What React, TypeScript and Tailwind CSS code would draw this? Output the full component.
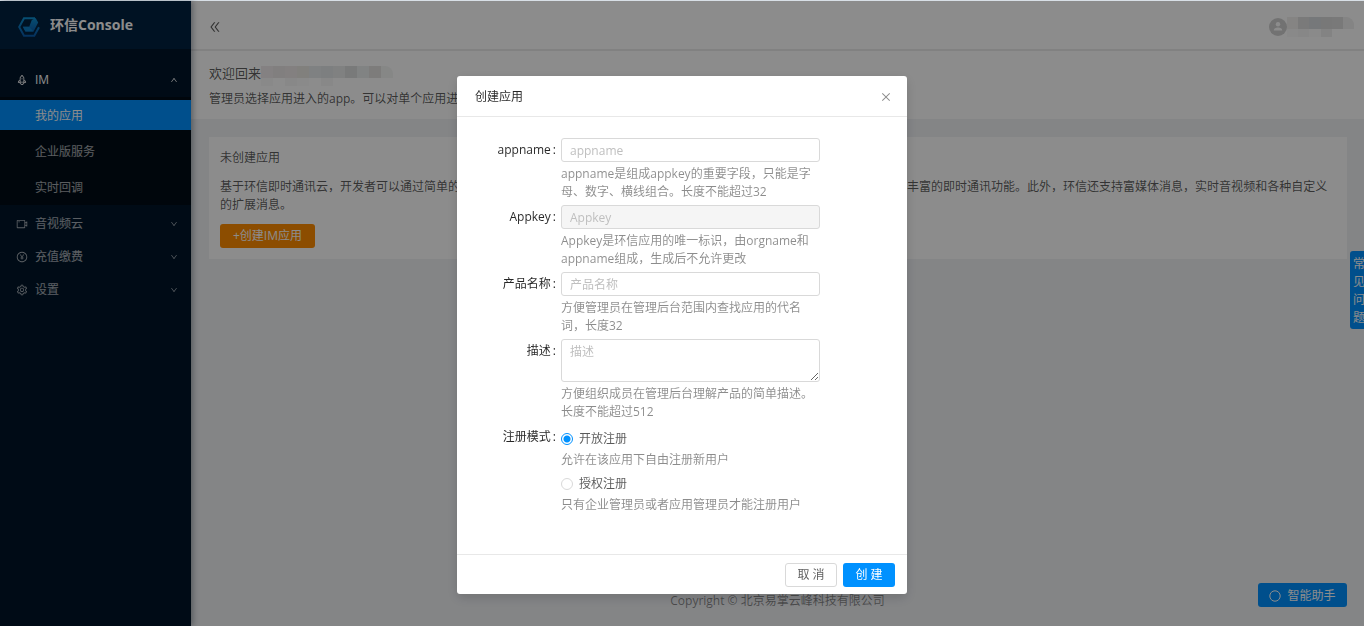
import { useState } from "react";
import {
  AiOutlineClose,
  AiOutlineDoubleLeft,
  AiOutlineDown,
  AiOutlinePayCircle,
  AiOutlineRocket,
  AiOutlineSetting,
  AiOutlineUp,
  AiOutlineVideoCamera,
} from "react-icons/ai";

const SUB_ITEMS = ["我的应用", "企业版服务", "实时回调"];

const SECTIONS = [
  { label: "音视频云", Icon: AiOutlineVideoCamera },
  { label: "充值缴费", Icon: AiOutlinePayCircle },
  { label: "设置", Icon: AiOutlineSetting },
];

const MODES = [
  { value: "open", label: "开放注册", help: "允许在该应用下自由注册新用户" },
  { value: "auth", label: "授权注册", help: "只有企业管理员或者应用管理员才能注册用户" },
];

const rowClass = "flex h-[30px] w-full items-center pt-0.5";

const inputClass =
  "block w-full rounded-[3px] border border-[#d9d9d9] bg-white px-2 text-xs text-black/65 outline-none placeholder:text-[#bfbfbf] disabled:bg-[#f5f5f5]";

function Logo() {
  return (
    <svg viewBox="0 0 22 20" className="h-5 w-[22px]" aria-hidden="true">
      <defs>
        <linearGradient id="logo" x1="0" y1="0" x2="0" y2="1">
          <stop offset="0" stopColor="#0d8fd0" />
          <stop offset="1" stopColor="#0a5cab" />
        </linearGradient>
      </defs>
      <path
        d="M17 1.3H6L1.2 10 6 18.7h10.3L21 10.2"
        fill="none"
        stroke="url(#logo)"
        strokeWidth="2"
      />
      <path d="M4.8 9.8h6.4L13.8 3l3.8-2 2.6 4.4-4.6 9.2H7.4z" fill="url(#logo)" />
      <path d="M4.8 9.8h6.4l4.4 4.8H7.4z" fill="#0d7cc4" />
    </svg>
  );
}

// Masked user names: a strip of muted blocks
function Mosaic({ top, bottom }: { top: string[]; bottom: string[] }) {
  return (
    <div aria-hidden="true" className="overflow-hidden rounded-r-lg">
      <div className="flex h-3">
        {top.map((c, i) => (
          <span key={i} className="w-3" style={{ background: c }} />
        ))}
      </div>
      <div className="flex h-2">
        {bottom.map((c, i) => (
          <span key={i} className="w-3" style={{ background: c }} />
        ))}
      </div>
    </div>
  );
}

function Sidebar() {
  return (
    <aside className="z-10 flex w-[191px] shrink-0 flex-col bg-[#001529] shadow-[2px_0_6px_rgba(0,21,41,0.35)]">
      <div className="flex h-12 items-center gap-2.5 bg-[#002140] pt-1 pl-[18px]">
        <Logo />
        <h1 className="pb-1 text-sm font-bold text-white">环信Console</h1>
      </div>
      <nav className="pt-[15px] text-white/65">
        <button className={`${rowClass} mb-[3px] pr-[13px] pl-4 text-white`}>
          <AiOutlineRocket className="mr-[7px] size-3" />
          IM
          <AiOutlineUp className="ml-auto size-2" />
        </button>
        <ul className="mb-[3px] flex flex-col gap-1.5 bg-[#000c17] py-[3px]">
          {SUB_ITEMS.map((item, i) => (
            <li key={item} className={i === 0 ? "bg-[#0091ff] text-white" : ""}>
              <a href="#" className={`${rowClass} pl-[35px]`}>
                {item}
              </a>
            </li>
          ))}
        </ul>
        {SECTIONS.map(({ label, Icon }) => (
          <button key={label} className={`${rowClass} mb-[3px] pr-[13px] pl-4`}>
            <Icon className="mr-[7px] size-3" />
            {label}
            <AiOutlineDown className="ml-auto size-2" />
          </button>
        ))}
      </nav>
    </aside>
  );
}

function Header() {
  return (
    <header className="flex h-[50px] items-center border-b-2 border-[#ececec] bg-white pt-1 pr-[10px] pl-[17px]">
      <button aria-label="收起菜单">
        <AiOutlineDoubleLeft className="size-3.5 text-black/65" />
      </button>
      <div className="ml-auto flex items-center">
        <svg viewBox="0 0 18 18" className="size-[18px]" aria-hidden="true">
          <circle cx="9" cy="9" r="9" fill="#d0d0d0" />
          <circle cx="9" cy="6.2" r="2.2" fill="#fff" />
          <path d="M4.8 12.6c0-2.2 1.8-3 4.2-3s4.2.8 4.2 3z" fill="#fff" />
        </svg>
        <div className="w-[67px]">
          <Mosaic
            top={["#f3f0ee", "#dedede", "#d8dade", "#dadada", "#dcdcdc", "#f0f0f0"]}
            bottom={["#f9f9f9", "#f6f6f6", "#fcfcfc", "#eeeeee", "#ffffff", "#ffffff"]}
          />
        </div>
      </div>
    </header>
  );
}

function Welcome() {
  return (
    <section className="bg-white px-[18px] pt-3 pb-[11px]">
      <div className="flex h-5">
        <h2 className="text-[13px] leading-5">欢迎回来</h2>
        <div className="pt-[3px]">
          <Mosaic
            top={["#f0eced", "#ece8e8", "#eeeaea", "#ece9e3", "#e8ebed", "#e4e7ea", "#e9ebeb", "#dcdfdf", "#eceeee", "#e4e2e1", "#f4f6f5"]}
            bottom={["#fafafa", "#ffffff", "#f8f7f7", "#fcfcfc", "#ffffff", "#f8f8f8", "#ffffff", "#ffffff", "#ffffff", "#ffffff", "#ffffff"]}
          />
        </div>
      </div>
      <p className="mt-[7px]">管理员选择应用进入的app。可以对单个应用进行管理</p>
    </section>
  );
}

function EmptyCard() {
  return (
    <section className="mt-[18px] mr-[17px] ml-[18px] bg-white px-[11px] pt-3 pb-[11px]">
      <h3>未创建应用</h3>
      <p className="mt-[11px]">
        基于环信即时通讯云，开发者可以通过简单的接口调用和服务端接口快速地在自己的应用中加入单聊、群聊、 聊天室、直播互动等丰富的即时通讯功能。此外，环信还支持富媒体消息，实时音视频和各种自定义的扩展消息。
      </p>
      <button className="mt-[10px] block h-6 w-[95px] rounded-[3px] bg-[#ff8c00] text-white">
        +创建IM应用
      </button>
    </section>
  );
}

interface FieldProps {
  id: string;
  label: string;
  help: string;
  disabled?: boolean;
  multiline?: boolean;
}

function Label({ htmlFor, children }: { htmlFor?: string; children: string }) {
  const className = "flex h-6 w-[86px] shrink-0 items-center justify-end pr-[5px] text-black/85";
  const content = (
    <>
      {children}
      <span className="ml-0.5">:</span>
    </>
  );
  if (!htmlFor) {
    return (
      <span id="mode-label" className={className}>
        {content}
      </span>
    );
  }
  return (
    <label htmlFor={htmlFor} className={className}>
      {content}
    </label>
  );
}

function Field({ id, label, help, disabled, multiline }: FieldProps) {
  return (
    <div className="flex">
      <Label htmlFor={id}>{label}</Label>
      <div className="w-[259px]">
        {multiline ? (
          <textarea id={id} placeholder={label} className={`${inputClass} h-[43px] resize-y py-1`} />
        ) : (
          <input
            id={id}
            type="text"
            placeholder={label}
            disabled={disabled}
            className={`${inputClass} h-6`}
          />
        )}
        <p className="mt-[3px] text-black/45">{help}</p>
      </div>
    </div>
  );
}

function CreateAppModal({ onClose }: { onClose: () => void }) {
  const [mode, setMode] = useState("open");

  return (
    <div className="fixed inset-x-0 top-px bottom-0 z-50 flex items-start justify-center overflow-auto bg-black/45 pt-[75px]">
      <div
        role="dialog"
        aria-modal="true"
        aria-labelledby="create-title"
        className="w-[450px] rounded-[3px] bg-white shadow-[0_4px_12px_rgba(0,0,0,0.15)]"
      >
        <div className="flex h-[41px] items-center justify-between border-b border-[#e8e8e8] pt-0.5 pr-[15px] pl-[18px]">
          <h2 id="create-title" className="text-black/85">
            创建应用
          </h2>
          <button aria-label="关闭" onClick={onClose} className="text-black/45">
            <AiOutlineClose className="size-3" />
          </button>
        </div>

        <form className="flex flex-col gap-1 pt-[21px] pb-10 pl-[18px]">
          <Field
            id="appname"
            label="appname"
            help="appname是组成appkey的重要字段，只能是字母、数字、横线组合。长度不能超过32"
          />
          <Field
            id="appkey"
            label="Appkey"
            help="Appkey是环信应用的唯一标识，由orgname和appname组成，生成后不允许更改"
            disabled
          />
          <Field
            id="product"
            label="产品名称"
            help="方便管理员在管理后台范围内查找应用的代名词，长度32"
          />
          <Field
            id="desc"
            label="描述"
            help="方便组织成员在管理后台理解产品的简单描述。长度不能超过512"
            multiline
          />
          <div className="flex">
            <Label>注册模式</Label>
            <div
              role="radiogroup"
              aria-labelledby="mode-label"
              className="flex flex-col gap-1.5 pt-[5px]"
            >
              {MODES.map((m) => (
                <div key={m.value}>
                  <label className="flex items-center gap-1.5 text-black/65">
                    <input
                      type="radio"
                      name="mode"
                      value={m.value}
                      checked={mode === m.value}
                      onChange={() => setMode(m.value)}
                      className="size-3 appearance-none rounded-full border border-[#d9d9d9] bg-white checked:border-[#0091ff] checked:bg-[radial-gradient(circle,#0091ff_3px,#fff_4px)]"
                    />
                    {m.label}
                  </label>
                  <p className="mt-[3px] text-black/45">{m.help}</p>
                </div>
              ))}
            </div>
          </div>
        </form>

        <div className="flex justify-end gap-1.5 border-t border-[#e8e8e8] px-3 pt-2 pb-[7px]">
          <button
            onClick={onClose}
            className="h-6 w-[52px] rounded-[3px] border border-[#d9d9d9] bg-white text-black/65"
          >
            取 消
          </button>
          <button className="h-6 w-[52px] rounded-[3px] bg-[#0091ff] text-white">创 建</button>
        </div>
      </div>
    </div>
  );
}

export default function App() {
  const [open, setOpen] = useState(true);

  return (
    <div className="flex min-h-screen border-t border-[#d8dfe6] bg-[#f0f2f5] font-['Open_Sans','Noto_Sans_CJK_SC',sans-serif] text-xs leading-[18px] text-black/65">
      <Sidebar />
      <div className="flex min-w-0 flex-1 flex-col">
        <Header />
        <main>
          <Welcome />
          <EmptyCard />
        </main>
        <footer className="mt-auto pb-4 text-center text-black/45">
          Copyright © 北京易掌云峰科技有限公司
        </footer>
      </div>

      <button className="fixed top-[251px] -right-1 w-[18px] rounded-[3px] bg-[#0091ff] pt-1 pb-0.5 pl-[3px] text-left text-white">
        常见问题
      </button>
      <button className="fixed right-[17px] bottom-[19px] flex h-6 w-[89px] items-center justify-center gap-1.5 rounded-[3px] bg-[#0091ff] pt-0.5 text-white">
        <svg viewBox="0 0 12 12" className="size-3" aria-hidden="true">
          <circle cx="6" cy="6" r="5.2" fill="none" stroke="currentColor" />
        </svg>
        智能助手
      </button>

      {open && <CreateAppModal onClose={() => setOpen(false)} />}
    </div>
  );
}
